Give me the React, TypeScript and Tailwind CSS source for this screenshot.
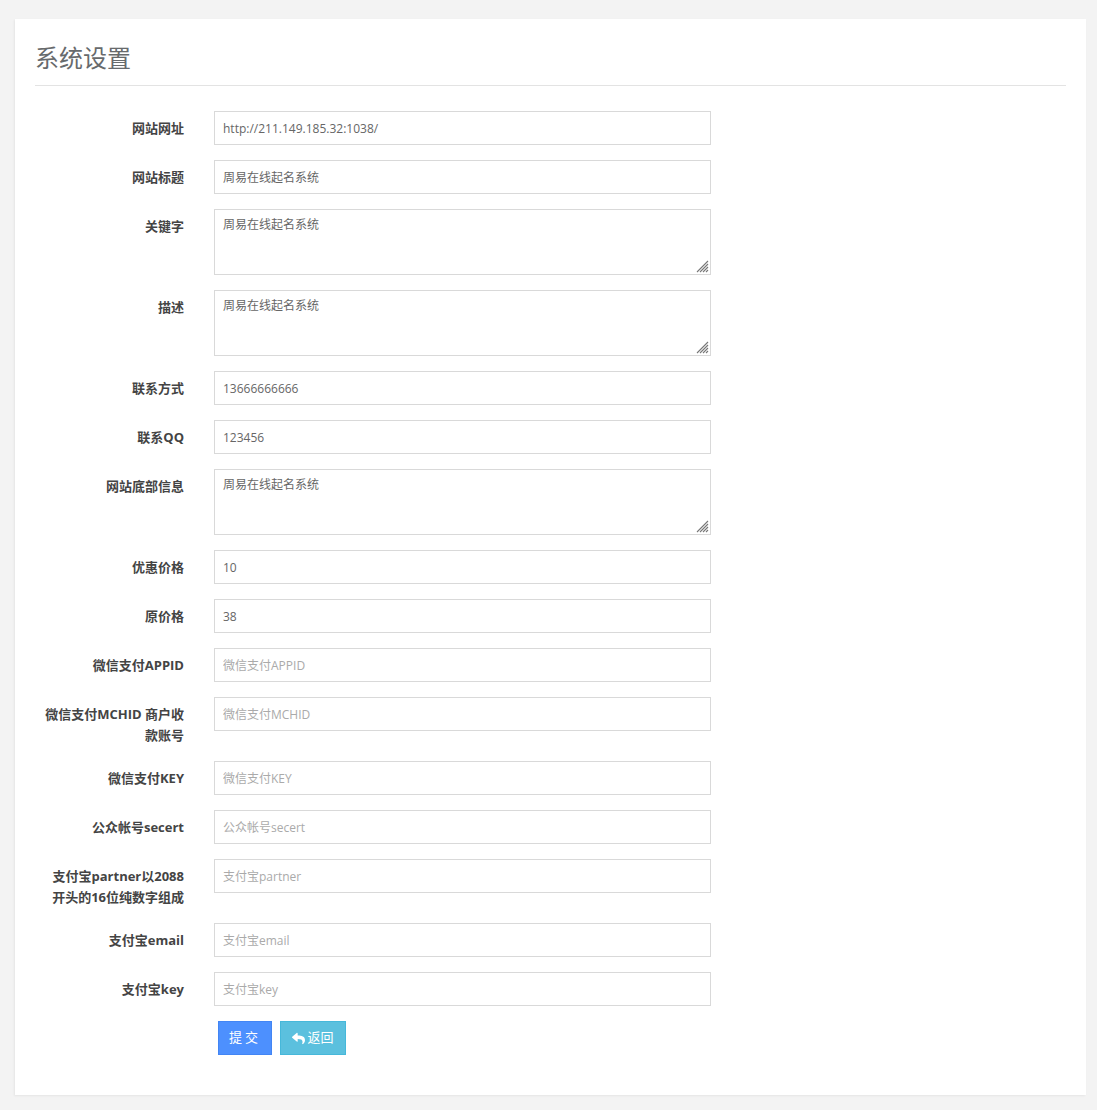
import { FaReply } from "react-icons/fa";

type Field = {
  label: string;
  value?: string;
  placeholder?: string;
  textarea?: boolean;
};

const fields: Field[] = [
  { label: "网站网址", value: "http://211.149.185.32:1038/" },
  { label: "网站标题", value: "周易在线起名系统" },
  { label: "关键字", value: "周易在线起名系统", textarea: true },
  { label: "描述", value: "周易在线起名系统", textarea: true },
  { label: "联系方式", value: "13666666666" },
  { label: "联系QQ", value: "123456" },
  { label: "网站底部信息", value: "周易在线起名系统", textarea: true },
  { label: "优惠价格", value: "10" },
  { label: "原价格", value: "38" },
  { label: "微信支付APPID", placeholder: "微信支付APPID" },
  { label: "微信支付MCHID 商户收款账号", placeholder: "微信支付MCHID" },
  { label: "微信支付KEY", placeholder: "微信支付KEY" },
  { label: "公众帐号secert", placeholder: "公众帐号secert" },
  { label: "支付宝partner以2088开头的16位纯数字组成", placeholder: "支付宝partner" },
  { label: "支付宝email", placeholder: "支付宝email" },
  { label: "支付宝key", placeholder: "支付宝key" },
];

const font = "font-['Open_Sans','Noto_Sans_CJK_SC',sans-serif]";

// hatch drawn in the textarea corner, like the browser's resize grip
function Grip() {
  return (
    <svg
      width="13"
      height="13"
      viewBox="0 0 13 13"
      className="absolute right-[2px] bottom-[2px] pointer-events-none"
    >
      <g stroke="#777" strokeWidth="1.1">
        <line x1="12" y1="1" x2="1" y2="12" />
        <line x1="12" y1="4" x2="4" y2="12" />
        <line x1="12" y1="7" x2="7" y2="12" />
        <line x1="12" y1="10" x2="10" y2="12" />
      </g>
    </svg>
  );
}

export default function App() {
  return (
    <div className={`min-h-[1110px] bg-[#f3f3f3] pt-[19px] pb-[17px] pl-[15px] pr-[11px] ${font}`}>
      <div className="bg-white px-5 pb-10 shadow-[-1px_1px_2px_rgba(0,0,0,0.06)]">
        {/* Header */}
        <div className="border-b border-[#e3e3e3] pt-[22px] pb-[10px]">
          <h2 className="text-[24px] leading-[34px] text-[#676a6c] font-normal">系统设置</h2>
        </div>

        <form className="mt-[25px]" onSubmit={(e) => e.preventDefault()}>
          {fields.map((f) => (
            <div key={f.label} className="flex mb-[15px]">
              <label className="w-[149px] shrink-0 pl-[6px] pt-[7px] text-right text-[13px] leading-[21px] font-bold text-[#444]">
                {f.label}
              </label>
              <div className="ml-[30px] w-[497px]">
                {f.textarea ? (
                  <div className="relative">
                    <textarea
                      defaultValue={f.value}
                      placeholder={f.placeholder}
                      className="block w-full h-[66px] resize-none border border-[#d9d9d9] px-2 pt-[6px] text-[12px] leading-[18px] text-[#666] outline-none"
                    />
                    <Grip />
                  </div>
                ) : (
                  <input
                    defaultValue={f.value}
                    placeholder={f.placeholder}
                    className="block w-full h-[34px] border border-[#d9d9d9] px-2 text-[12px] text-[#666] placeholder:text-[#aaa] outline-none"
                  />
                )}
              </div>
            </div>
          ))}

          <div className="flex gap-2 pl-[183px]">
            <button
              type="submit"
              className="h-[34px] w-[54px] bg-[#4d90fe] border border-[#4285f4] text-white text-[13px] tracking-[3px]"
            >
              提交
            </button>
            <button
              type="button"
              className="h-[34px] w-[66px] flex items-center justify-center gap-[2px] bg-[#5bc0de] border border-[#46b8da] text-white text-[13px]"
            >
              <FaReply className="w-[13px] h-[13px]" />
              返回
            </button>
          </div>
        </form>
      </div>
    </div>
  );
}
